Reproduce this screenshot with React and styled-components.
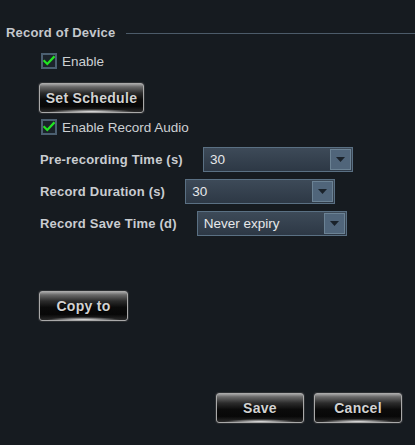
import React from 'react';
import styled, { createGlobalStyle } from 'styled-components';

const GlobalStyle = createGlobalStyle`
  html, body {
    margin: 0;
    padding: 0;
    background: #161b20;
  }
  body {
    font-family: "Liberation Sans", Arial, sans-serif;
  }
`;

const Page = styled.div`
  width: 415px;
  height: 445px;
  box-sizing: border-box;
  background: #161b20;
  display: flex;
  flex-direction: column;
  padding-top: 25px;
  padding-bottom: 22px;
  color: #c9ccd0;
  overflow: hidden;
`;

const TitleRow = styled.div`
  display: flex;
  align-items: center;
  height: 16px;
  line-height: 16px;
  padding-left: 6px;
`;

const Title = styled.span`
  font-size: 13px;
  font-weight: bold;
  letter-spacing: 0.2px;
  color: #c4c8cc;
  white-space: nowrap;
`;

const TitleLine = styled.div`
  flex: 1;
  height: 1px;
  margin-left: 11px;
  margin-top: 0;
  background: #4c5b69;
`;

const Content = styled.div`
  display: flex;
  flex-direction: column;
  align-items: flex-start;
  padding-left: 39px;
`;

const CheckRow = styled.label`
  display: flex;
  align-items: center;
  height: 16px;
  margin-top: ${p => p.$top}px;
  margin-left: 2px;
  font-size: 13.5px;
  color: #cdd0d3;
  gap: 5px;
`;

const Box = styled.span`
  width: 16px;
  height: 16px;
  box-sizing: border-box;
  border: 2px solid #4b5f70;
  background: #1b232a;
  display: flex;
  align-items: center;
  justify-content: center;
`;

const GlossButton = styled.button`
  position: relative;
  width: ${p => p.$w}px;
  height: 30px;
  margin-top: ${p => p.$top || 0}px;
  padding: 0;
  border: 1px solid #a9a9a9;
  border-radius: 3px;
  box-shadow: 0 0 0 1px #2b2e31;
  background:
    radial-gradient(ellipse 42% 3px at 50% 100%, rgba(255, 255, 255, 0.95), rgba(255, 255, 255, 0) 100%),
    linear-gradient(#a4a4a4 0%, #6a6a6a 10%, #2c2c2c 32%, #0b0b0b 55%, #080808 80%, #2a2a2a 100%);
  color: #d2d2d2;
  font-family: "Liberation Sans", Arial, sans-serif;
  font-size: 14px;
  font-weight: bold;
  letter-spacing: 0.3px;
  text-shadow: 0 1px 1px #000;
  cursor: pointer;
`;

const FieldList = styled.div`
  display: flex;
  flex-direction: column;
  gap: 7px;
  margin-top: 12px;
`;

const FieldRow = styled.div`
  display: flex;
  align-items: center;
  height: 25px;
  gap: 20px;
  padding-left: 1px;
`;

const FieldLabel = styled.span`
  font-size: 13px;
  font-weight: bold;
  letter-spacing: 0.2px;
  color: #c9ccd0;
  white-space: nowrap;
`;

const Select = styled.div`
  position: relative;
  width: 150px;
  height: 25px;
  box-sizing: border-box;
  border: 1px solid #5a7083;
  background: linear-gradient(#3d4a58, #2d3845);
  display: flex;
  align-items: center;
  padding-left: 6px;
  font-size: 13.5px;
  color: #e6e8ea;
`;

const ArrowBox = styled.span`
  position: absolute;
  right: 1px;
  top: 1px;
  width: 21px;
  height: 21px;
  box-sizing: border-box;
  border: 1px solid #6b8294;
  background: #50657a;
  display: flex;
  align-items: center;
  justify-content: center;
`;

const Footer = styled.div`
  margin-top: auto;
  display: flex;
  justify-content: flex-end;
  gap: 10px;
  padding-right: 13px;
`;

function Check() {
  return (
    <svg width="14" height="12" viewBox="0 0 14 12">
      <path d="M1.5 6 L5 9.5 L12.5 1.5" fill="none" stroke="#22e622" strokeWidth="2.6" strokeLinecap="square" />
    </svg>
  );
}

function Arrow() {
  return (
    <svg width="9" height="5" viewBox="0 0 9 5">
      <path d="M0 0 H9 L4.5 5 Z" fill="#1a222a" />
    </svg>
  );
}

const fields = [
  { label: 'Pre-recording Time (s)', value: '30' },
  { label: 'Record Duration (s)', value: '30' },
  { label: 'Record Save Time (d)', value: 'Never expiry' },
];

export default function App() {
  return (
    <Page>
      <GlobalStyle />
      <TitleRow>
        <Title>Record of Device</Title>
        <TitleLine />
      </TitleRow>
      <Content>
        <CheckRow $top={12}>
          <Box><Check /></Box>
          Enable
        </CheckRow>
        <GlossButton $w={105} $top={14}>Set Schedule</GlossButton>
        <CheckRow $top={6}>
          <Box><Check /></Box>
          Enable Record Audio
        </CheckRow>
        <FieldList>
          {fields.map(f => (
            <FieldRow key={f.label}>
              <FieldLabel>{f.label}</FieldLabel>
              <Select>
                {f.value}
                <ArrowBox><Arrow /></ArrowBox>
              </Select>
            </FieldRow>
          ))}
        </FieldList>
        <GlossButton $w={89} $top={55}>Copy to</GlossButton>
      </Content>
      <Footer>
        <GlossButton $w={88}>Save</GlossButton>
        <GlossButton $w={88}>Cancel</GlossButton>
      </Footer>
    </Page>
  );
}
